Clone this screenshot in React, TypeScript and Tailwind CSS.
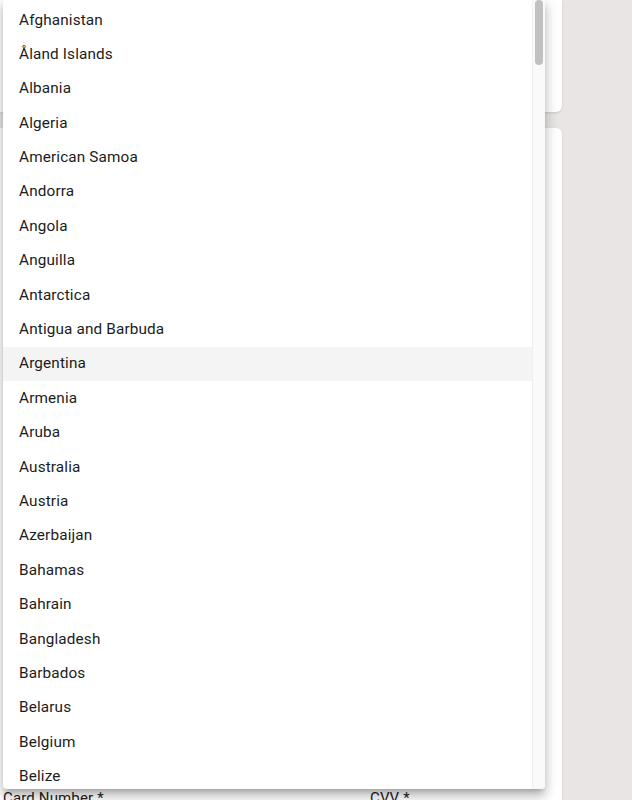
const countries = [
  "Afghanistan",
  "Åland Islands",
  "Albania",
  "Algeria",
  "American Samoa",
  "Andorra",
  "Angola",
  "Anguilla",
  "Antarctica",
  "Antigua and Barbuda",
  "Argentina",
  "Armenia",
  "Aruba",
  "Australia",
  "Austria",
  "Azerbaijan",
  "Bahamas",
  "Bahrain",
  "Bangladesh",
  "Barbados",
  "Belarus",
  "Belgium",
  "Belize",
];

export default function App() {
  return (
    <div
      className="relative h-[800px] w-[632px] overflow-hidden bg-[#e9e5e5]"
      style={{ fontFamily: "Roboto, 'Liberation Sans', sans-serif" }}
    >
      {/* page behind the menu */}
      <div className="flex w-[562px] flex-col gap-4">
        <div className="h-[112px] rounded-br-md bg-white shadow-sm" />
        <div className="h-[700px] rounded-tr-md bg-white pt-[660px] shadow-sm">
          <div className="flex px-[3px] text-[15px] leading-[20px] tracking-[0.15px] text-[#212121]">
            <span className="w-[367px]">Card Number *</span>
            <span>CVV *</span>
          </div>
        </div>
      </div>

      {/* open select menu */}
      <div className="absolute top-0 left-[3px] flex h-[789px] w-[542px] overflow-hidden rounded-b bg-white shadow-[0_5px_5px_-3px_rgba(0,0,0,0.2),0_8px_10px_1px_rgba(0,0,0,0.14),0_3px_14px_2px_rgba(0,0,0,0.12)]">
        <ul className="flex-1 pt-[2.8px]">
          {countries.map((c) => (
            <li
              key={c}
              className={
                "flex h-[34.4px] items-center px-4 text-[15.3px] tracking-[0.15px] text-[#1c1c1c] " +
                (c === "Argentina" ? "bg-[#f4f4f4]" : "")
              }
            >
              {c}
            </li>
          ))}
        </ul>
        <div className="flex w-[13px] justify-center border-l border-[#f0f0f0] bg-[#fafafa]">
          <div className="h-[65px] w-[8px] rounded-full bg-[#c1c1c1]" />
        </div>
      </div>
    </div>
  );
}
